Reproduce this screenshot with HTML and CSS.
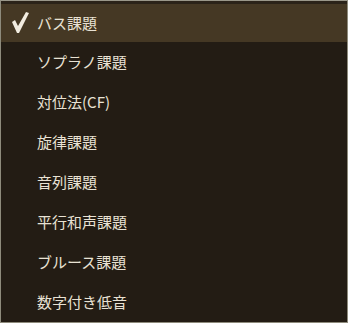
FILE: index.html
```html
<!DOCTYPE html>
<html lang="ja">
<head>
    <meta charset="UTF-8">
    <title>課題メニュー</title>
    <link rel="stylesheet" href="styles.css">
</head>
<body>
    <div class="menu">
        <div class="menu-item active">
            <span class="check">
                <svg width="20" height="24" viewBox="0 0 20 24">
                    <polygon points="0,10 3,8 6,14 14,0 17,1 7,21 5,21" fill="#f2ece0"/>
                </svg>
            </span>
            <span class="label">バス課題</span>
        </div>
        <div class="menu-item"><span class="check"></span><span class="label">ソプラノ課題</span></div>
        <div class="menu-item"><span class="check"></span><span class="label">対位法(CF)</span></div>
        <div class="menu-item"><span class="check"></span><span class="label">旋律課題</span></div>
        <div class="menu-item"><span class="check"></span><span class="label">音列課題</span></div>
        <div class="menu-item"><span class="check"></span><span class="label">平行和声課題</span></div>
        <div class="menu-item"><span class="check"></span><span class="label">ブルース課題</span></div>
        <div class="menu-item"><span class="check"></span><span class="label">数字付き低音</span></div>
    </div>
</body>
</html>
```

FILE: styles.css
```css
* {
    margin: 0;
    padding: 0;
    box-sizing: border-box;
}

body {
    font-family: "Noto Sans CJK JP", "Noto Sans", sans-serif;
    background: #231c14;
    color: #e9e2d4;
}

.menu {
    width: 348px;
    height: 323px;
    border: 1px solid #8e8b7c;
    border-top-color: #9a978a;
    background: #231c14;
    padding-top: 3px;
    display: flex;
    flex-direction: column;
}

.menu-item {
    display: flex;
    align-items: center;
    height: 40px;
    font-size: 15px;
}

.menu-item.active {
    height: 38px;
    background: #453824;
    box-shadow: 0 -3px 0 #2b2319;
}

.check {
    width: 36px;
    display: flex;
    justify-content: flex-end;
    padding-right: 5px;
    padding-top: 1px;
}

.label {
    line-height: 1;
    padding-bottom: 2px;
}
```
